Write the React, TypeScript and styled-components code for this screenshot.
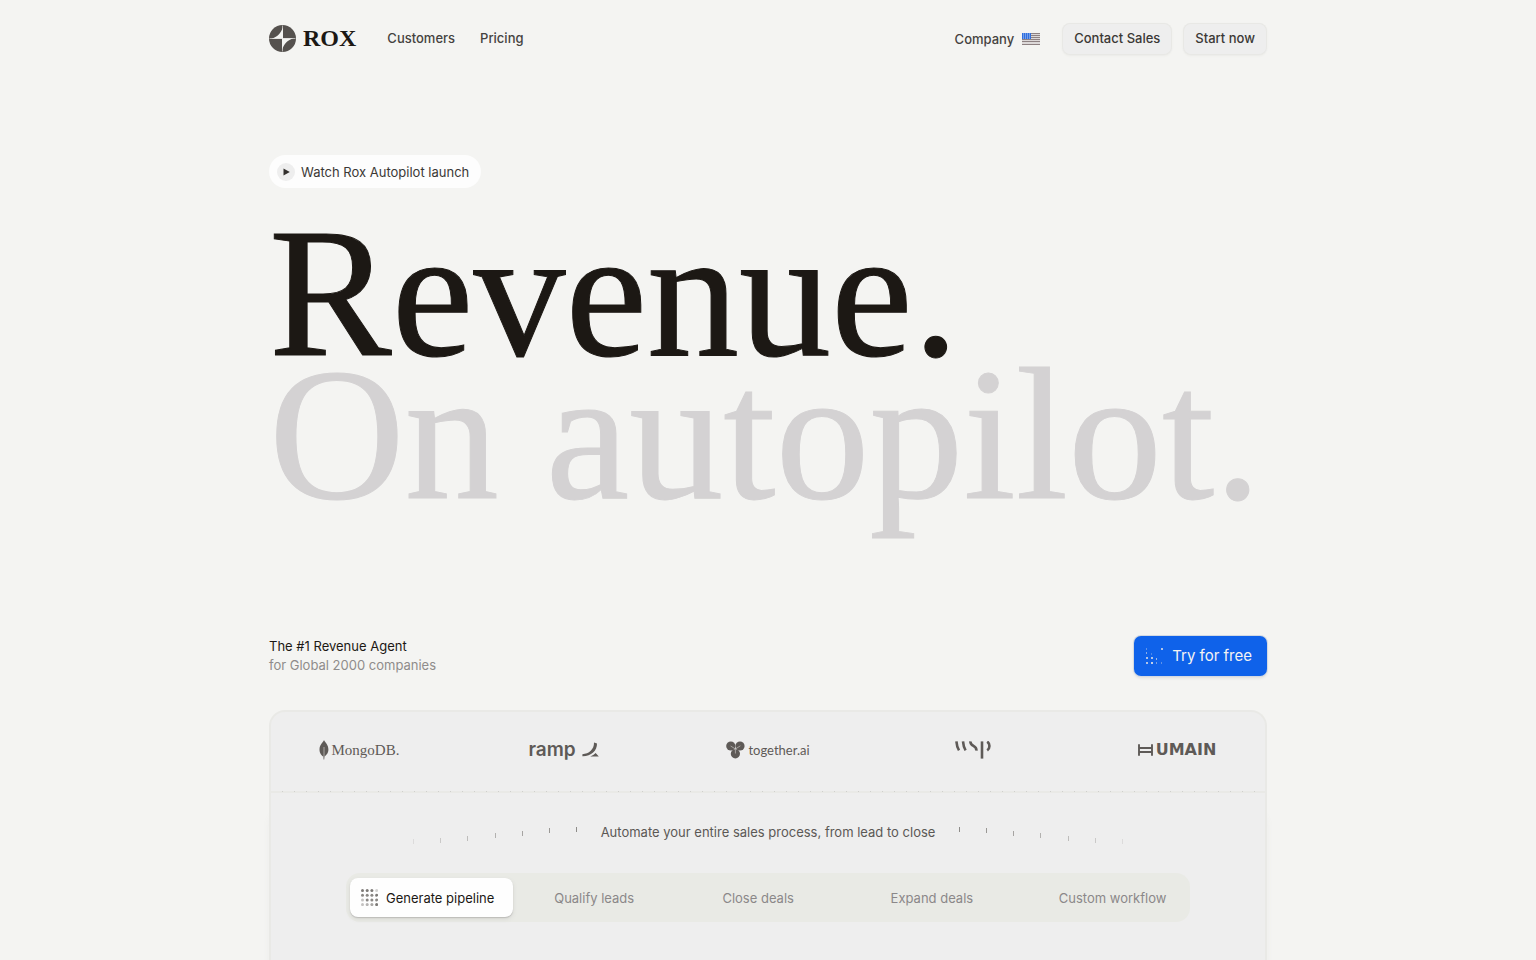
import React from "react";
import styled, { createGlobalStyle } from "styled-components";

const Global = createGlobalStyle`
  *, *::before, *::after { box-sizing: border-box; }
  body {
    margin: 0;
    background: #f4f4f2;
    color: #1c1814;
    font-family: Inter, "Liberation Sans", sans-serif;
    font-size: 14px;
    line-height: 20px;
  }
  button { font: inherit; color: inherit; border: 0; cursor: pointer; }
  svg { display: block; flex: none; }
`;

const Page = styled.div`
  display: flex;
  flex-direction: column;
  width: 100%;
  max-width: 1030px;
  min-height: 100vh;
  margin: 0 auto;
  padding: 0 16px;
`;

const Header = styled.header`
  display: flex;
  align-items: center;
  justify-content: space-between;
  padding: 23px 0;
`;

const NavGroup = styled.nav`
  display: flex;
  align-items: center;
  gap: 25px;
  padding-bottom: 2px;
`;

const Actions = styled.div`
  display: flex;
  align-items: center;
  gap: 11px;
`;

const Brand = styled.a`
  display: flex;
  align-items: center;
  gap: 7px;
  margin-right: 6px;
  color: #1c1814;
  font: 700 24px/30px "Liberation Serif", serif;
  text-decoration: none;
`;

const NavLink = styled.a`
  display: flex;
  align-items: center;
  gap: 8px;
  color: #45423f;
  font-size: 13px;
  font-weight: 500;
  text-decoration: none;
`;

const Company = styled(NavLink)`
  margin-right: 11px;
`;

const SoftButton = styled.button`
  height: 32px;
  padding: 0 12px 2px;
  border-radius: 8px;
  background: #eeeeee;
  box-shadow: inset 0 0 0 1px #e8e8e5, 0 1px 2px #ebebe8;
  color: #3b3835;
  font-size: 13px;
  font-weight: 500;
`;

const Hero = styled.section`
  display: flex;
  flex-direction: column;
  align-items: flex-start;
  padding-top: 77px;
`;

const WatchButton = styled.button`
  display: flex;
  align-items: center;
  gap: 6px;
  height: 33px;
  padding: 0 12px 0 8px;
  border-radius: 17px;
  background: #fdfdfd;
  color: #3b3835;
  font-size: 13px;
`;

const PlayDisc = styled.span`
  display: grid;
  place-items: center;
  width: 18px;
  height: 18px;
  border-radius: 50%;
  background: #eeeeee;
`;

const Headline = styled.h1`
  margin: 35px 0 0;
  font: 400 184px/141px "Liberation Serif", serif;
  white-space: nowrap;
`;

const HeadlineLine = styled.span<{ $muted?: boolean }>`
  display: block;
  font-size: ${(p) => (p.$muted ? "188px" : "184px")};
  color: ${(p) => (p.$muted ? "#d4d2d3" : "#1c1814")};
  -webkit-text-stroke: 1px currentColor;
`;

const PitchRow = styled.div`
  display: flex;
  align-items: center;
  justify-content: space-between;
  width: 100%;
  margin-top: 131px;
`;

const Pitch = styled.p`
  margin: 0;
  font-size: 13px;
  line-height: 19px;
`;

const PitchNote = styled.span`
  display: block;
  color: #8f8c8b;
`;

const PrimaryButton = styled.button`
  display: flex;
  align-items: center;
  gap: 9px;
  height: 40px;
  padding: 0 15px 0 12px;
  border-radius: 7px;
  background: #0f62ea;
  box-shadow: 0 0 0 1px #d3d9e2, 0 2px 3px #dcdcdc;
  color: #f3f3f3;
  font-size: 15px;
`;

const Card = styled.section`
  flex: 1;
  display: flex;
  flex-direction: column;
  margin-top: 34px;
  border: 2px solid #e9e9e6;
  border-bottom: 0;
  border-radius: 16px 16px 0 0;
  background: #eeeeee;
  box-shadow: 0 100px 6px #ececea;
  clip-path: inset(0 -8px 0 -8px);
`;

const Logos = styled.div`
  display: flex;
  align-items: center;
  justify-content: space-between;
  height: 79px;
  padding: 0 38px 3px;
`;

const Wordmark = styled.span<{ $kind: "mongo" | "ramp" | "together" | "wsp" | "humain" }>`
  display: flex;
  align-items: center;
  justify-content: center;
  width: 100px;
  color: #5e5a57;
  gap: ${(p) => (p.$kind === "ramp" ? "6px" : "3px")};
  font: ${(p) =>
    ({
      mongo: '400 15px/20px "Liberation Serif", serif',
      ramp: '600 19px/20px Inter, sans-serif',
      together: '400 13px/20px Lato, sans-serif',
      wsp: '400 16px/20px Inter, sans-serif',
      humain: '700 16px/20px "DejaVu Sans", sans-serif',
    })[p.$kind]};
`;

const Divider = styled.hr`
  width: 100%;
  height: 2px;
  margin: 0;
  border: 0;
  background:
    repeating-linear-gradient(90deg, transparent 0 11px, #cfcfcc 11px 12px) 0 0 / 100% 1px no-repeat,
    #e9e9e6;
`;

const Automate = styled.div`
  display: flex;
  align-items: center;
  justify-content: center;
  gap: 23px;
  margin-top: 27px;
  color: #5b5855;
  font-size: 13px;
`;

const Tabs = styled.div`
  display: grid;
  grid-template-columns: repeat(5, 1fr);
  gap: 5px;
  width: 100%;
  max-width: 844px;
  margin: 29px auto 0;
  padding: 5px 4px;
  border-radius: 14px;
  background: #e9eae5;
`;

const Tab = styled.button<{ $active?: boolean }>`
  display: flex;
  align-items: center;
  height: 39px;
  padding: 0 0 0 ${(p) => (p.$active ? "11px" : "36px")};
  gap: 8px;
  border-radius: 8px;
  background: ${(p) => (p.$active ? "#fefefe" : "transparent")};
  box-shadow: ${(p) => (p.$active ? "0 1px 1px #bdbdba, 0 2px 4px #d5d5d2" : "none")};
  color: ${(p) => (p.$active ? "#1c1814" : "#8b8889")};
  font-size: 13px;
  white-space: nowrap;
`;

const RoxMark = () => (
  <svg width="27" height="27" viewBox="0 0 27 27" aria-hidden="true">
    <circle cx="13.5" cy="13.5" r="13.5" fill="#55514e" />
    <path d="M13.5 0.5V26.5M0.5 13.5H26.5" stroke="#b5b3b0" strokeWidth="1" />
    <path d="M14 2.5V13.8H2.5C8.4 12 11.6 8.4 14 2.5Z" fill="#f4f4f2" />
    <path d="M13 24.5V13.2H24.5C18.6 15 15.4 18.6 13 24.5Z" fill="#f4f4f2" />
  </svg>
);

const Flag = () => (
  <svg width="18" height="12" viewBox="0 0 18 12" aria-label="United States">
    <rect width="18" height="12" fill="#dcd8d8" />
    {[0, 2, 4, 6, 8, 11].map((y) => (
      <rect key={y} y={y} width="18" height="1" fill="#8d8182" />
    ))}
    <rect width="9" height="6" fill="#2f6fe0" />
    {[1, 3, 5].map((y) =>
      [1, 3, 5, 7].map((x) => (
        <rect key={`${x}-${y}`} x={x} y={y - 0.5} width="1" height="1" fill="#bcd0f2" />
      ))
    )}
  </svg>
);

const TRY_DOTS: [number, number, number][] = [
  [1, 2, 0.4], [1, 6, 0.6], [1, 11, 0.8], [1, 16, 0.8], [6, 7, 0.3], [6, 11, 0.8],
  [6, 16, 0.9], [11, 12, 0.7], [11, 16, 0.5], [16, 16, 0.4], [16, 2, 0.8],
];

const TryDots = () => (
  <svg width="17" height="18" viewBox="0 0 17 18" aria-hidden="true">
    {TRY_DOTS.map(([x, y, o]) => (
      <rect key={`${x}-${y}`} x={x - 1} y={y - 1} width={o > 0.7 ? 2 : 1} height="2" fill="#d8dde6" opacity={o} />
    ))}
  </svg>
);

const PIPELINE_DOTS = [
  [0.9, 0.9, 0.9, 0.3],
  [0.8, 0.8, 0.8, 0.9],
  [0.4, 0.8, 0.8, 0.8],
  [0.4, 0.5, 0.6, 0.9],
];

const PipelineDots = () => (
  <svg width="17" height="17" viewBox="0 0 17 17" aria-hidden="true">
    {PIPELINE_DOTS.map((row, r) =>
      row.map((o, c) => (
        <circle key={`${r}-${c}`} cx={1.5 + c * 4.7} cy={1.5 + r * 4.7} r="1.5" fill="#6e6a67" opacity={o} />
      ))
    )}
  </svg>
);

const Leaf = () => (
  <svg width="10" height="20" viewBox="0 0 10 20" aria-hidden="true">
    <path d="M5 0C6 2.4 9.4 4.6 9.4 9.6C9.4 13.6 7 15.4 5.5 16.6L5.2 19.4H4.6L4.4 16.6C2.8 15.4 0.5 13.4 0.5 9.4C0.5 4.8 4.2 2.4 5 0Z" fill="#5e5a57" />
    <path d="M5 7V17" stroke="#aaa7a5" strokeWidth="1" />
  </svg>
);

const RampMark = () => (
  <svg width="17" height="16" viewBox="0 0 17 16" aria-hidden="true">
    <path d="M12 0.6L15 1.4C15.2 8.6 9 14.4 0.4 14.2V12.2C7 12 12.2 7.4 12 0.6Z" fill="#5e5a57" />
    <path d="M13.6 11L16.8 14.4H8.2C10.4 13.6 12.2 12.6 13.6 11Z" fill="#5e5a57" />
  </svg>
);

const TogetherMark = () => (
  <svg width="19" height="18" viewBox="0 0 19 18" aria-hidden="true">
    <circle cx="4.8" cy="5" r="4.6" fill="#5e5a57" />
    <circle cx="14" cy="5" r="4.6" fill="#5e5a57" />
    <circle cx="9.4" cy="12.8" r="4.6" fill="#5e5a57" />
    <path d="M4.6 5L9.4 8L14.4 4.8M9.4 8V12.5" stroke="#a5a29f" strokeWidth="1" fill="none" />
  </svg>
);

const WspMark = () => (
  <svg width="36" height="18" viewBox="0 0 36 18" role="img" aria-label="WSP">
    <g stroke="#5e5a57" strokeWidth="2.6" fill="none">
      <path d="M1.4 0.4C1.7 4 2.4 7 4 9.4" />
      <path d="M8 0.4C8.3 4 9 7 10.6 9.4" />
      <path d="M15.4 0.4C15 6 22 4 21.4 9.6" />
      <path d="M27 0.4V17.6" />
      <path d="M32.2 0.6C35.2 2.6 35.2 7.4 32.2 9.4" />
    </g>
  </svg>
);

const HumainMark = () => (
  <svg width="15" height="12" viewBox="0 0 15 12" aria-label="H">
    <path d="M1 0.2V11.8M14 0.2V11.8M1 4H14M1 8H14" stroke="#5e5a57" strokeWidth="1.9" fill="none" />
  </svg>
);

const TICKS: [number, number, number][] = [
  [0, 19, 0.15], [27, 18, 0.3], [54, 16, 0.4], [82, 13, 0.5], [109, 11, 0.6], [136, 8, 0.7], [163, 7, 0.8],
];

const Ticks = ({ side }: { side: "left" | "right" }) => (
  <svg width="165" height="24" viewBox="0 0 165 24" aria-hidden="true">
    {TICKS.map(([x, y, o]) => (
      <rect key={x} x={side === "left" ? x : 164 - x} y={y} width="1" height="5" fill="#76736f" opacity={o} />
    ))}
  </svg>
);

export default function App() {
  return (
    <>
      <Global />
      <Page>
        <Header>
          <NavGroup aria-label="Main">
            <Brand href="#">
              <RoxMark />
              ROX
            </Brand>
            <NavLink href="#customers">Customers</NavLink>
            <NavLink href="#pricing">Pricing</NavLink>
          </NavGroup>
          <Actions>
            <Company href="#company">
              Company
              <Flag />
            </Company>
            <SoftButton>Contact Sales</SoftButton>
            <SoftButton>Start now</SoftButton>
          </Actions>
        </Header>

        <Hero>
          <WatchButton>
            <PlayDisc>
              <svg width="7" height="8" viewBox="0 0 7 8" aria-hidden="true">
                <path d="M0.5 0.5L6.8 4L0.5 7.5Z" fill="#33302d" />
              </svg>
            </PlayDisc>
            Watch Rox Autopilot launch
          </WatchButton>
          <Headline>
            <HeadlineLine>Revenue.</HeadlineLine>
            <HeadlineLine $muted>On autopilot.</HeadlineLine>
          </Headline>
          <PitchRow>
            <Pitch>
              The #1 Revenue Agent
              <PitchNote>for Global 2000 companies</PitchNote>
            </Pitch>
            <PrimaryButton>
              <TryDots />
              Try for free
            </PrimaryButton>
          </PitchRow>
        </Hero>

        <Card>
          <Logos>
            <Wordmark $kind="mongo"><Leaf />MongoDB.</Wordmark>
            <Wordmark $kind="ramp">ramp<RampMark /></Wordmark>
            <Wordmark $kind="together"><TogetherMark />together.ai</Wordmark>
            <Wordmark $kind="wsp"><WspMark /></Wordmark>
            <Wordmark $kind="humain"><HumainMark />UMAIN</Wordmark>
          </Logos>
          <Divider />
          <Automate>
            <Ticks side="left" />
            Automate your entire sales process, from lead to close
            <Ticks side="right" />
          </Automate>
          <Tabs role="tablist">
            <Tab role="tab" aria-selected="true" $active>
              <PipelineDots />
              Generate pipeline
            </Tab>
            <Tab role="tab" aria-selected="false">Qualify leads</Tab>
            <Tab role="tab" aria-selected="false">Close deals</Tab>
            <Tab role="tab" aria-selected="false">Expand deals</Tab>
            <Tab role="tab" aria-selected="false">Custom workflow</Tab>
          </Tabs>
        </Card>
      </Page>
    </>
  );
}
